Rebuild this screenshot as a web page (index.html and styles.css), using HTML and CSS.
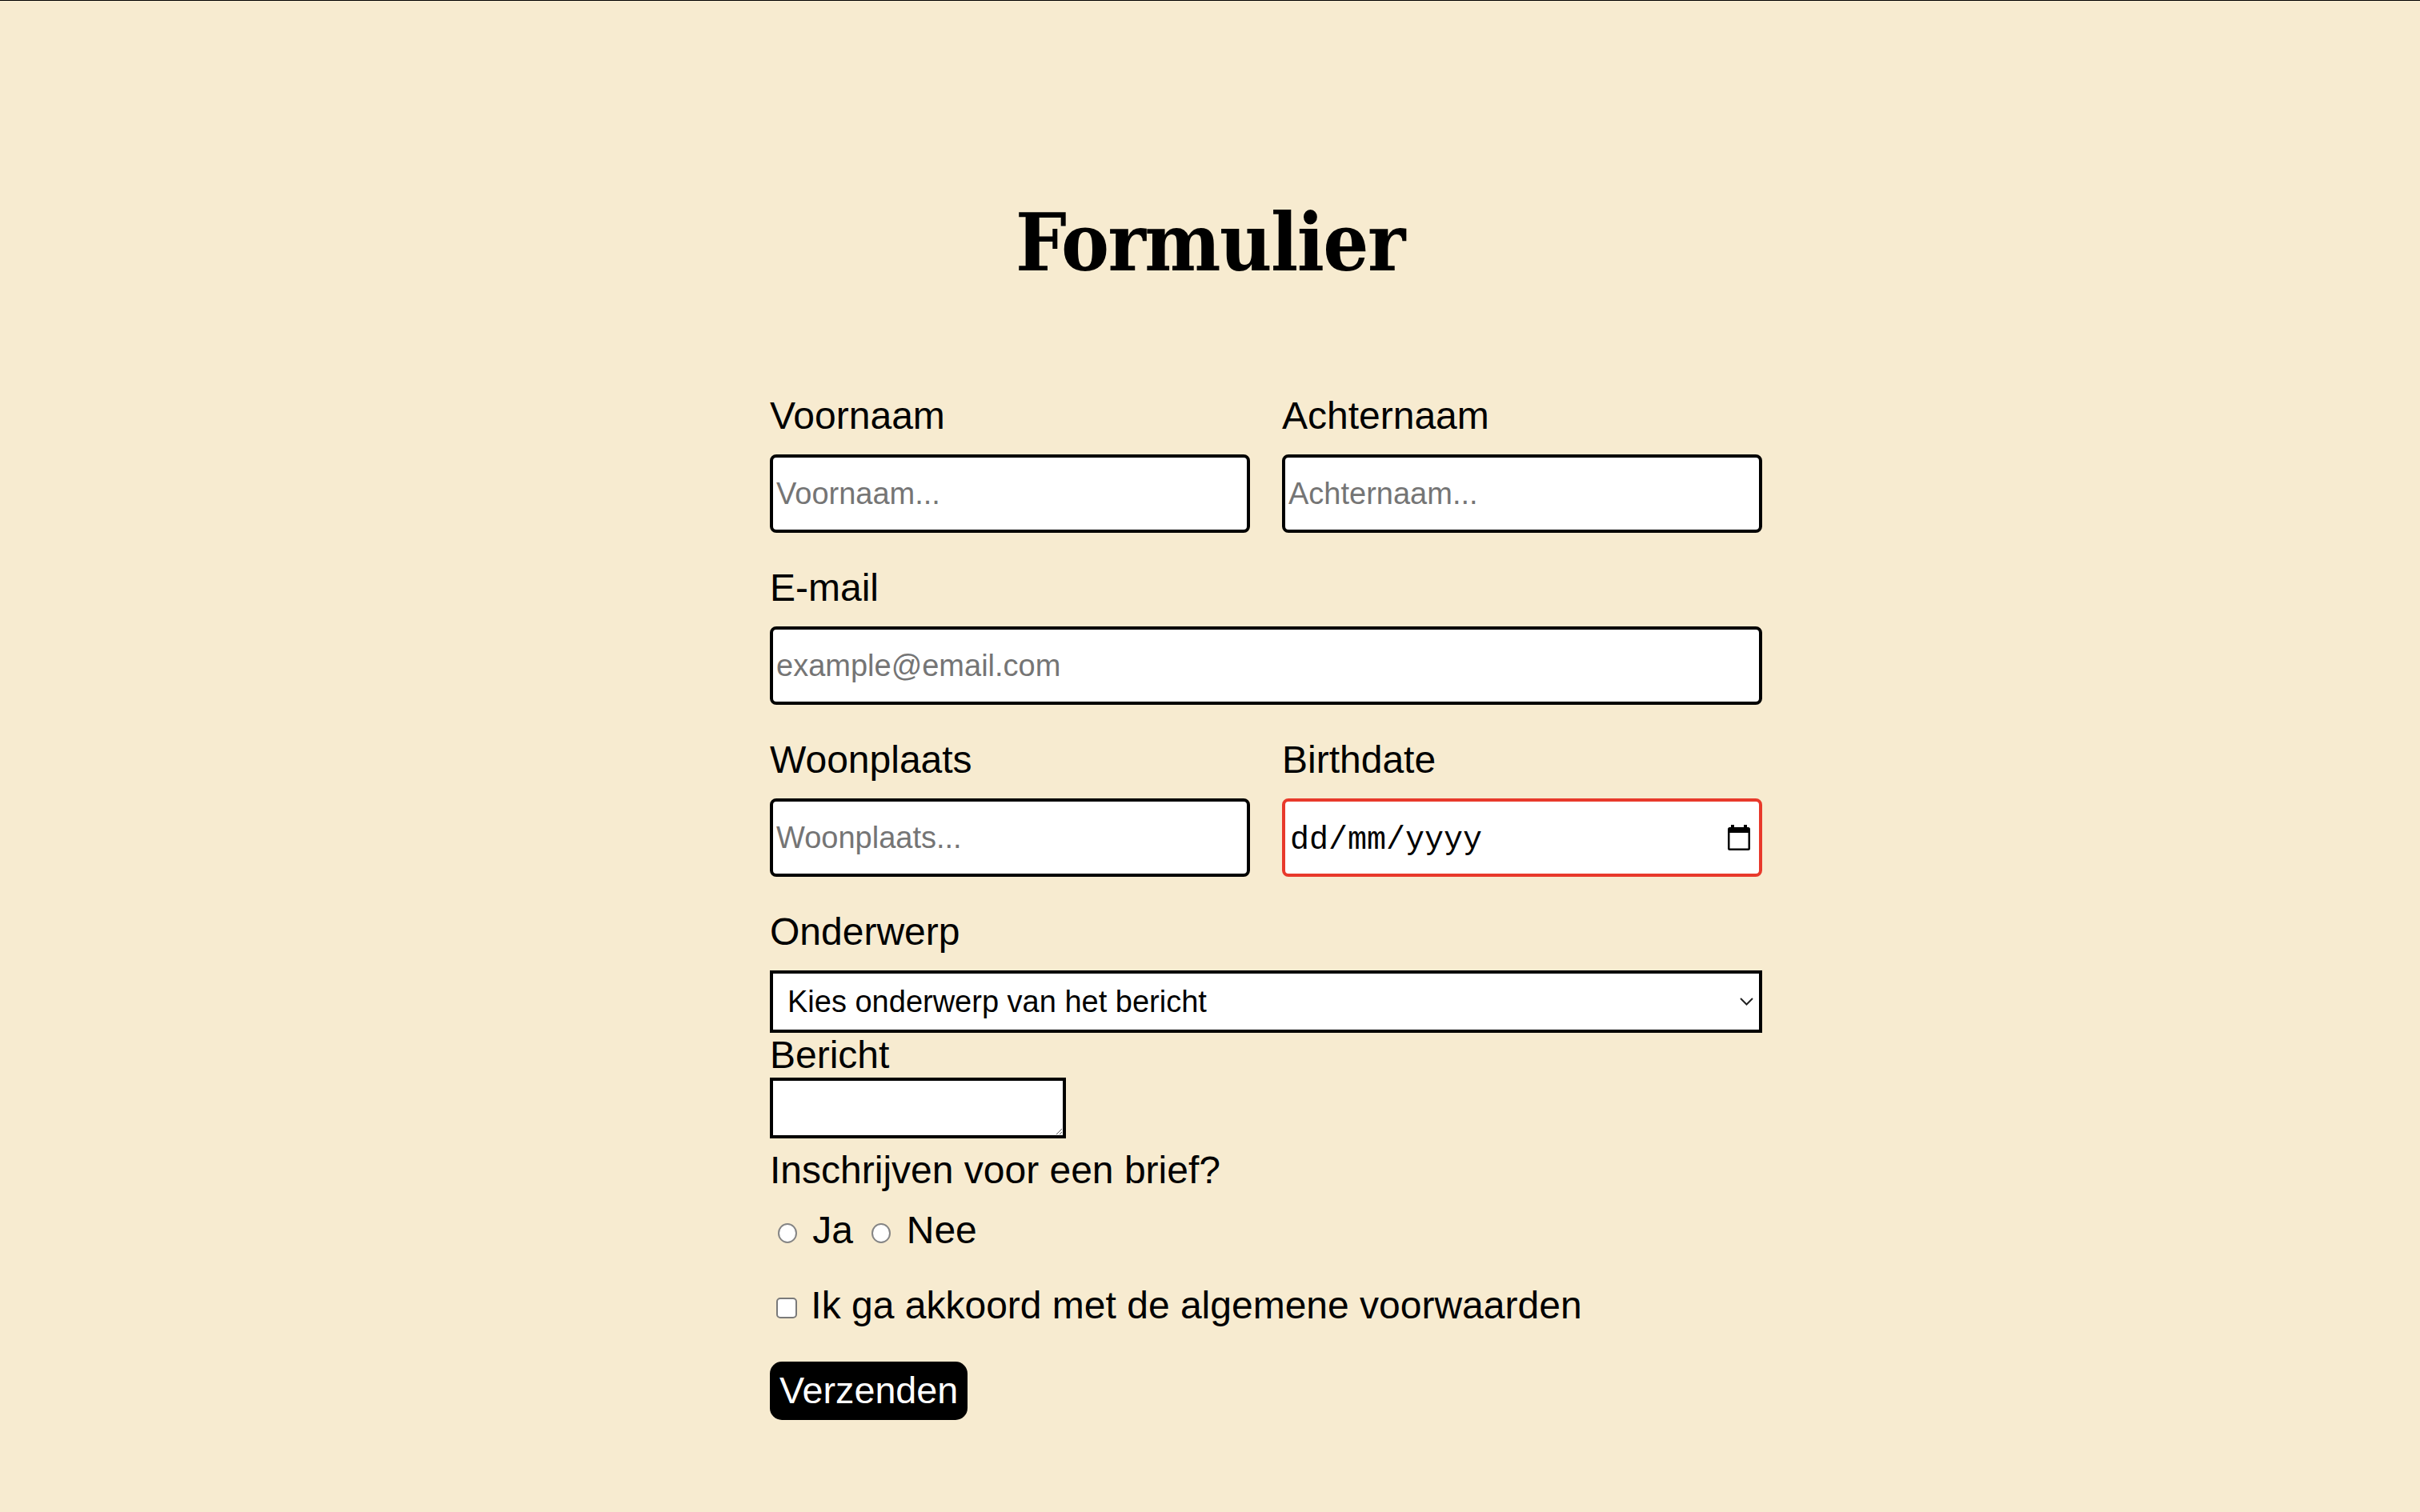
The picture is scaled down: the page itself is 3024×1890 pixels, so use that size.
FILE: index.html
```html
<!DOCTYPE html>
<html lang="nl">
<head>
<meta charset="utf-8">
<title>Formulier</title>
<link rel="stylesheet" href="styles.css">
</head>
<body>
<main class="page">
  <h1 class="title">Formulier</h1>
  <form class="form">
    <div class="grid">
      <div class="field">
        <label class="lbl" for="voornaam">Voornaam</label>
        <input class="input" id="voornaam" type="text" placeholder="Voornaam...">
      </div>
      <div class="field">
        <label class="lbl" for="achternaam">Achternaam</label>
        <input class="input" id="achternaam" type="text" placeholder="Achternaam...">
      </div>
      <div class="field field-full">
        <label class="lbl" for="email">E-mail</label>
        <input class="input" id="email" type="email" placeholder="example@email.com">
      </div>
      <div class="field">
        <label class="lbl" for="woonplaats">Woonplaats</label>
        <input class="input" id="woonplaats" type="text" placeholder="Woonplaats...">
      </div>
      <div class="field">
        <label class="lbl" for="birthdate">Birthdate</label>
        <div class="input date-wrap">
          <input class="date-input" id="birthdate" type="text" placeholder="dd/mm/yyyy">
          <svg class="cal" width="28" height="32" viewBox="0 0 28 32" aria-hidden="true">
            <rect x="4" y="0" width="4" height="5" fill="#000"/>
            <rect x="20" y="0" width="4" height="5" fill="#000"/>
            <rect x="0" y="3" width="28" height="29" rx="2.5" fill="#000"/>
            <rect x="2.5" y="10" width="23" height="19.5" fill="#fff"/>
          </svg>
        </div>
      </div>
      <div class="field field-full">
        <label class="lbl" for="onderwerp">Onderwerp</label>
        <div class="select-wrap">
          <select class="select" id="onderwerp">
            <option>Kies onderwerp van het bericht</option>
            <option>Vraag</option>
            <option>Klacht</option>
            <option>Overig</option>
          </select>
          <svg class="chev" width="17" height="10" viewBox="0 0 17 10" aria-hidden="true">
            <polyline points="1,1 8.5,8.5 16,1" fill="none" stroke="#222" stroke-width="2"/>
          </svg>
        </div>
      </div>
    </div>
    <label class="lbl block" for="bericht">Bericht</label>
    <textarea class="textarea" id="bericht"></textarea>
    <p class="lbl question">Inschrijven voor een brief?</p>
    <div class="choices"><label class="opt"><input class="radio" type="radio" name="brief"> Ja</label> <label class="opt"><input class="radio" type="radio" name="brief"> Nee</label></div>
    <div class="agree"><label class="opt"><input class="check" type="checkbox"> Ik ga akkoord met de algemene voorwaarden</label></div>
    <button class="submit" type="submit">Verzenden</button>
  </form>
</main>
</body>
</html>
```

FILE: styles.css
```css
html, body {
  margin: 0;
  padding: 0;
}

body {
  background: #f7ebd0;
  border-top: 1px solid #000;
  color: #000;
  font-family: "Liberation Sans", Arial, sans-serif;
  min-height: 1889px;
}

.page {
  padding-top: 242px;
}

.title {
  margin: 0;
  text-align: center;
  font-family: "DejaVu Serif Condensed", "DejaVu Serif", serif;
  font-stretch: condensed;
  font-weight: 700;
  font-size: 100px;
  line-height: 120px;
  letter-spacing: -1.5px;
}

.form {
  width: 1240px;
  margin-left: calc(50% - 550px);
  margin-top: 129px;
}

.grid {
  display: grid;
  grid-template-columns: 600px 600px;
  column-gap: 40px;
  row-gap: 41px;
}

.field {
  display: flex;
  flex-direction: column;
  gap: 20px;
}

.field-full {
  grid-column: 1 / -1;
}

.lbl {
  font-size: 48px;
  line-height: 56px;
}

.block {
  display: block;
}

.input {
  box-sizing: border-box;
  height: 98px;
  width: 100%;
  border: 4px solid #000;
  border-radius: 8px;
  background: #fff;
  padding: 0 4px;
  margin: 0;
  font-family: "Liberation Sans", Arial, sans-serif;
  font-size: 38px;
  color: #000;
  outline: none;
}

.input::placeholder {
  color: #757575;
}

.date-wrap {
  display: flex;
  align-items: center;
  border-color: #e8392b;
  padding: 0 11px 0 4px;
}

.date-input {
  flex: 1;
  min-width: 0;
  border: 0;
  background: transparent;
  padding: 6px 0 0 2px;
  margin: 0;
  font-family: "Liberation Mono", "Courier New", monospace;
  font-size: 40px;
  color: #000;
  outline: none;
}

.date-input::placeholder {
  color: #000;
}

.cal {
  flex: none;
  display: block;
}

.select-wrap {
  position: relative;
}

.select {
  appearance: none;
  -webkit-appearance: none;
  display: block;
  box-sizing: border-box;
  width: 100%;
  height: 78px;
  border: 4px solid #000;
  border-radius: 0;
  background: #fff;
  padding: 0 18px;
  margin: 0;
  font-family: "Liberation Sans", Arial, sans-serif;
  font-size: 38px;
  color: #000;
  outline: none;
}

.chev {
  position: absolute;
  right: 11px;
  top: 34px;
  pointer-events: none;
}

.textarea {
  display: block;
  box-sizing: border-box;
  width: 370px;
  height: 76px;
  border: 4px solid #000;
  border-radius: 0;
  background: #fff;
  margin: 0 0 12px 0;
  padding: 2px;
  font-family: "Liberation Sans", Arial, sans-serif;
  font-size: 32px;
  resize: both;
}

.question {
  margin: 0;
}

.choices {
  margin-top: 19px;
  font-size: 48px;
  line-height: 56px;
}

.agree {
  margin-top: 38px;
  font-size: 48px;
  line-height: 56px;
}

.radio {
  appearance: none;
  -webkit-appearance: none;
  box-sizing: border-box;
  width: 24px;
  height: 25px;
  margin: 0 6px 0 10px;
  border: 2px solid #858585;
  border-radius: 50%;
  background: #fff;
  vertical-align: baseline;
}

.check {
  appearance: none;
  -webkit-appearance: none;
  box-sizing: border-box;
  width: 26px;
  height: 26px;
  margin: 0 4px 0 8px;
  border: 2px solid #7a7a7a;
  border-radius: 5px;
  background: #fff;
  vertical-align: baseline;
}

.submit {
  display: block;
  margin-top: 42px;
  height: 73px;
  padding: 0 12px;
  border: 0;
  border-radius: 15px;
  background: #000;
  color: #fff;
  font-family: "Liberation Sans", Arial, sans-serif;
  font-size: 46.7px;
  line-height: 73px;
}
```
